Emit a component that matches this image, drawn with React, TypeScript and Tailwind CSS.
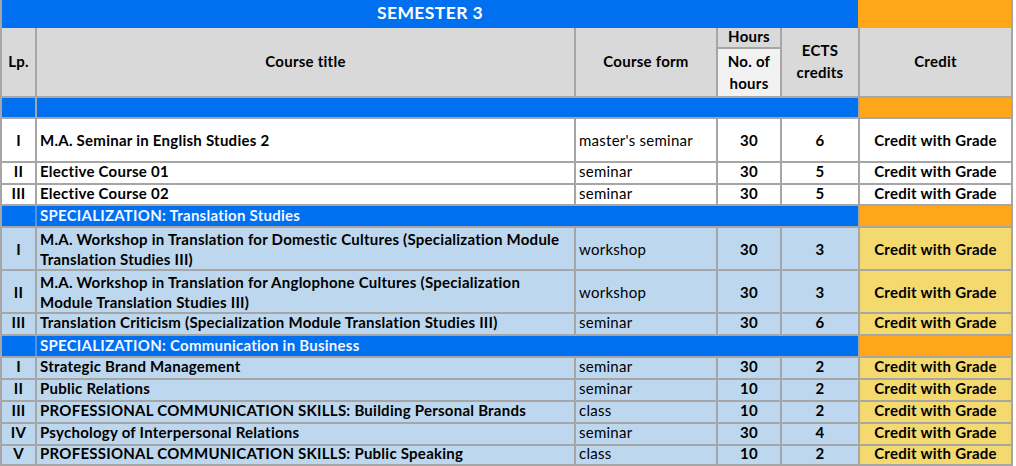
import React from "react";

const COLS = "grid grid-cols-[33px_537px_140px_62px_76px_151px] gap-x-[2px]";

type Row = { lp: string; title: React.ReactNode; form: string; hours: string; ects: string; h: string; single?: boolean };

const base: Row[] = [
  { lp: "I", title: "M.A. Seminar in English Studies 2", form: "master's seminar", hours: "30", ects: "6", h: "h-[42px]" },
  { lp: "II", title: "Elective Course 01", form: "seminar", hours: "30", ects: "5", h: "h-[20px]", single: true },
  { lp: "III", title: "Elective Course 02", form: "seminar", hours: "30", ects: "5", h: "h-[19px]", single: true },
];

const trans: Row[] = [
  {
    lp: "I",
    title: (
      <>
        M.A. Workshop in Translation for Domestic Cultures (Specialization Module
        <br />
        Translation Studies III)
      </>
    ),
    form: "workshop",
    hours: "30",
    ects: "3",
    h: "h-[41px]",
  },
  {
    lp: "II",
    title: (
      <>
        M.A. Workshop in Translation for Anglophone Cultures (Specialization
        <br />
        Module Translation Studies III)
      </>
    ),
    form: "workshop",
    hours: "30",
    ects: "3",
    h: "h-[41px]",
  },
  { lp: "III", title: "Translation Criticism (Specialization Module Translation Studies III)", form: "seminar", hours: "30", ects: "6", h: "h-[20px]", single: true },
];

const comm: Row[] = [
  { lp: "I", title: "Strategic Brand Management", form: "seminar", hours: "30", ects: "2", h: "h-[20px]", single: true },
  { lp: "II", title: "Public Relations", form: "seminar", hours: "10", ects: "2", h: "h-[20px]", single: true },
  { lp: "III", title: "PROFESSIONAL COMMUNICATION SKILLS: Building Personal Brands", form: "class", hours: "10", ects: "2", h: "h-[20px]", single: true },
  { lp: "IV", title: "Psychology of Interpersonal Relations", form: "seminar", hours: "30", ects: "4", h: "h-[20px]", single: true },
  { lp: "V", title: "PROFESSIONAL COMMUNICATION SKILLS: Public Speaking", form: "class", hours: "10", ects: "2", h: "h-[18px]", single: true },
];

function DataRow({ r, tinted }: { r: Row; tinted: boolean }) {
  const bg = tinted ? "bg-[#bdd7ee]" : "bg-white";
  const credit = tinted ? "bg-[#f3d96e]" : "bg-white";
  const pad = r.single ? "pb-[3px] leading-[15px]" : "leading-[20px]";
  return (
    <div className={`${COLS} ${r.h}`}>
      <div className={`${bg} ${pad} flex items-center justify-center font-bold`}>{r.lp}</div>
      <div className={`${bg} ${pad} flex items-center pl-[3px] font-bold whitespace-nowrap`}>
        <div>{r.title}</div>
      </div>
      <div className={`${bg} ${pad} flex items-center pl-[3px]`}>{r.form}</div>
      <div className={`${bg} ${pad} flex items-center justify-center font-bold`}>{r.hours}</div>
      <div className={`${bg} ${pad} flex items-center justify-center font-bold`}>{r.ects}</div>
      <div className={`${credit} ${pad} flex items-center justify-center font-bold`}>Credit with Grade</div>
    </div>
  );
}

function SpecRow({ text }: { text: string }) {
  return (
    <div className={`${COLS} h-[20px]`}>
      <div className="bg-[#0070f0]" />
      <div className="col-span-4 -ml-[2px] border-l-2 border-[#4f94ea] bg-[#0070f0] flex items-center pl-[3px] pb-[2px] leading-[15px] font-bold text-[#f2f6ff] whitespace-nowrap">
        {text}
      </div>
      <div className="bg-[#ffa619]" />
    </div>
  );
}

export default function App() {
  return (
    <div
      className="w-[1016px] h-[466px] bg-white text-black text-[15px] tracking-[0.25px]"
      style={{ fontFamily: "Lato, 'Noto Sans', sans-serif" }}
    >
      <div className="w-[1013px] bg-[#a6a6a6] flex flex-col gap-y-[2px] px-[2px] pb-[2px]">
        <div className={`${COLS} h-[26px]`}>
          <div className="col-span-5 bg-[#0070f0] flex items-center justify-center pb-[2px] font-bold text-white text-[17.5px] tracking-[0.4px]">
            SEMESTER 3
          </div>
          <div className="-ml-[2px] bg-[#ffa619]" />
        </div>
        <div className={`${COLS} h-[68px] font-bold`}>
          <div className="bg-[#d9d9d9] flex items-center justify-center pb-[2px]">Lp.</div>
          <div className="bg-[#d9d9d9] flex items-center justify-center pb-[2px]">Course title</div>
          <div className="bg-[#d9d9d9] flex items-center justify-center pb-[2px]">Course form</div>
          <div className="flex flex-col gap-y-[2px]">
            <div className="h-[19px] bg-[#d9d9d9] flex items-center justify-center pb-[2px] leading-[15px]">Hours</div>
            <div className="flex-1 bg-[#f2f2f2] flex items-center justify-center text-center leading-[22px] pb-[1px]">
              No. of
              <br />
              hours
            </div>
          </div>
          <div className="bg-[#d9d9d9] flex items-center justify-center text-center leading-[22px] pb-[2px]">
            ECTS
            <br />
            credits
          </div>
          <div className="bg-[#d9d9d9] flex items-center justify-center pb-[2px]">Credit</div>
        </div>
        <div className={`${COLS} h-[19px]`}>
          <div className="bg-[#0070f0]" />
          <div className="col-span-4 bg-[#0070f0]" />
          <div className="bg-[#ffa619]" />
        </div>
        {base.map((r, i) => (
          <DataRow key={"b" + i} r={r} tinted={false} />
        ))}
        <SpecRow text="SPECIALIZATION: Translation Studies" />
        {trans.map((r, i) => (
          <DataRow key={"t" + i} r={r} tinted />
        ))}
        <SpecRow text="SPECIALIZATION: Communication in Business" />
        {comm.map((r, i) => (
          <DataRow key={"c" + i} r={r} tinted />
        ))}
      </div>
    </div>
  );
}
